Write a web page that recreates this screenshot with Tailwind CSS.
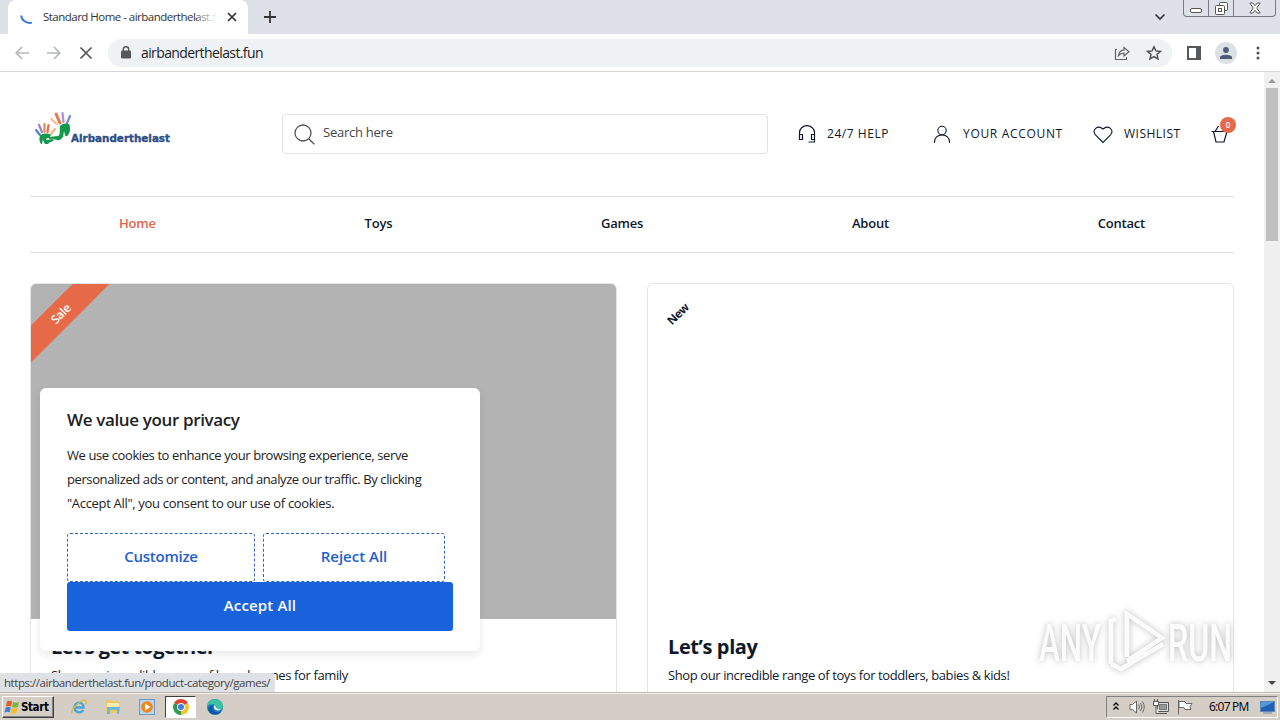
<!DOCTYPE html>
<html lang="en">
<head>
    <meta charset="UTF-8">
    <meta name="viewport" content="width=device-width, initial-scale=1.0">
    <title>Standard Home - airbanderthelast.fun</title>
    <script src="https://cdn.jsdelivr.net/npm/@tailwindcss/browser@4"></script>
</head>
<body class="w-[1280px] h-[720px] overflow-hidden bg-white flex flex-col font-['Open_Sans',sans-serif]">

    <!-- Tab strip -->
    <div class="h-[34px] shrink-0 bg-[#dee1e8] flex items-start relative">
        <div class="ml-2 w-[240px] h-[34px] bg-white rounded-t-lg flex items-center pl-3">
            <svg class="w-4 h-4 shrink-0" viewBox="0 0 16 16" fill="none"><path d="M1.2 6.5C1.5 11 6 15 12 13.6" stroke="#3b78e0" stroke-width="2"/></svg>
            <div class="ml-[7px] w-[174px] overflow-hidden whitespace-nowrap text-[11.5px] tracking-[-0.52px] text-[#333] relative">
                Standard Home - airbanderthelast.fun
                <div class="absolute right-0 top-0 w-5 h-full bg-linear-to-r from-white/20 to-white"></div>
            </div>
            <svg class="ml-[10px] w-[10px] h-[10px] shrink-0" viewBox="0 0 10 10"><path d="M1 1l8 8M9 1l-8 8" stroke="#333" stroke-width="1.7"/></svg>
        </div>
        <svg class="ml-[15px] mt-[10px] w-[14px] h-[14px]" viewBox="0 0 14 14"><path d="M7 1v12M1 7h12" stroke="#333" stroke-width="1.8"/></svg>
        <svg class="ml-auto mr-[17px] mt-[12px] w-3 h-[10px]" viewBox="0 0 12 10" fill="none"><path d="M1.5 2.5L6 7l4.500-4.500" stroke="#333" stroke-width="1.7"/></svg>
        <!-- Window buttons -->
        <div class="w-[93px] h-[17px] mr-1 border border-t-0 border-[#777b86] rounded-b flex">
            <div class="w-[25px] border-r border-[#777b86] flex justify-center pt-[8px]"><div class="w-3 h-[5px] border border-[#555] rounded-[2px] bg-white"></div></div>
            <div class="w-[25px] border-r border-[#777b86] flex justify-center pt-[2px]">
                <svg class="w-[13px] h-[13px]" viewBox="0 0 13 13" fill="#fff" stroke="#555"><rect x="4.500" y=".5" width="8" height="8" rx="1"/><rect x=".5" y="3.500" width="9" height="9" rx="1"/><rect x="3.500" y="6.500" width="3" height="3"/></svg>
            </div>
            <div class="flex-1 flex justify-center pt-[2px]">
                <svg class="w-[12px] h-[12px]" viewBox="0 0 12 12" fill="#fff" stroke="#555"><path d="M.8 1h3L6 3.600 8.200 1h3L7.800 6l3.400 5h-3L6 8.400 3.800 11h-3L4.200 6z"/></svg>
            </div>
        </div>
    </div>

    <!-- Toolbar -->
    <div class="h-[38px] shrink-0 bg-white border-b border-[#d5d7da] flex items-center relative">
        <svg class="ml-[15px] w-[14px] h-[14px]" viewBox="0 0 14 14" fill="none" stroke="#b5b7ba" stroke-width="1.7"><path d="M14 7H1.500M7 1L1.200 7 7 13"/></svg>
        <svg class="ml-[18px] w-[14px] h-[14px]" viewBox="0 0 14 14" fill="none" stroke="#b5b7ba" stroke-width="1.7"><path d="M0 7h12.500M7 1l5.800 6L7 13"/></svg>
        <svg class="ml-[18px] w-[14px] h-[14px]" viewBox="0 0 14 14" fill="none" stroke="#555" stroke-width="1.7"><path d="M1.500 1.500l11 11M12.500 1.500l-11 11"/></svg>
        <div class="ml-[15px] w-[1064px] h-7 rounded-full bg-[#eff2f5] flex items-center pl-[13px] pr-[10px]">
            <svg class="w-[10px] h-[13px]" viewBox="0 0 10 13"><rect y="4.500" width="10" height="8" rx="1.200" fill="#54575b"/><path d="M2.300 5V3.500a2.700 2.700 0 015.400 0V5" fill="none" stroke="#54575b" stroke-width="1.400"/></svg>
            <span class="ml-[10px] text-[14px] tracking-[-0.61px] text-[#222]">airbanderthelast.fun</span>
            <svg class="ml-auto w-4 h-4" viewBox="0 0 16 16" fill="none" stroke="#5f6368" stroke-width="1.200"><path d="M3 4.500H1.500v10h11V12"/><path d="M4.500 10.500C5 7 7 5.200 10 5.200V2.500l5 4.300-5 4.200V8.200c-2.500 0-4 .6-5.500 2.300z"/></svg>
            <svg class="ml-[16px] w-4 h-4" viewBox="0 0 16 16" fill="none" stroke="#505358" stroke-width="1.500"><path d="M8 1.800l1.900 4.100 4.500.5-3.400 3 1 4.500L8 11.600l-4 2.300 1-4.500-3.400-3 4.500-.5z"/></svg>
        </div>
        <svg class="ml-[15px] w-[14px] h-[14px]" viewBox="0 0 14 14"><path d="M0 0h14v14H0zM2 2v10h7V2z" fill="#55585d" fill-rule="evenodd"/></svg>
        <div class="ml-[14px] w-[22px] h-[22px] rounded-full bg-[#dde1e6] flex items-center justify-center">
            <svg class="w-3 h-3" viewBox="0 0 12 12" fill="#505c78"><circle cx="6" cy="3" r="2.900"/><path d="M0 12V9.800C1.500 7 10.500 7 12 9.800V12z"/></svg>
        </div>
        <svg class="ml-[19px] w-1 h-[14px]" viewBox="0 0 4 14" fill="#505358"><circle cx="2" cy="2" r="1.500"/><circle cx="2" cy="7" r="1.500"/><circle cx="2" cy="12" r="1.500"/></svg>
    </div>

    <!-- Page viewport -->
    <div class="h-[620px] shrink-0 flex relative overflow-hidden">
        <main class="w-[1264px] px-[30px] text-[#10192b]">
            <header class="h-[124px] flex items-center">
                <!-- Logo -->
                <div class="w-[251px] flex items-end h-[38px] -mt-[12px]">
                    <svg class="ml-1 w-[144px] h-[38px]" viewBox="0 0 144 38" fill="none" stroke-linecap="round">
                        <g stroke-width="2.200">
                            <path d="M2 21l4 5" stroke="#4f83c9"/><path d="M5 16l3 7" stroke="#9a80cf"/>
                            <path d="M10.500 15l0 8" stroke="#e9894d"/><path d="M14.500 16l-1 7" stroke="#e86c4d"/><path d="M21 20l-4 5" stroke="#f3b487"/>
                            <path d="M17.500 10l5 5" stroke="#f6bd8b"/><path d="M28.500 4l1 9" stroke="#b386d6"/>
                            <path d="M36 7l-3 7" stroke="#7789cb"/>
                        </g>
                        <path d="M22 5l4 9" stroke="#e9784c" stroke-width="3"/>
                        <!-- palms -->
                        <path d="M6 27c2-3 8-3 11-1l-2 3c-3 0-4 2-2 2l5-1 2 1c-2 2-5 2-6 4h-3c-1-2-2-3-2-5l-1 5H7c-2-3-2-6-1-8z" fill="#12994a"/>
                        <path d="M26 17c2-3 7-3 9-2 2 4 1 9-1 11-1 2-3 1-3 0l-1-4-1 6-3 3c-3 1-6-2-11-1v-2l9-1c3-1 1-6 2-10z" fill="#12994a"/>
                        <text x="37" y="33" textLength="99" lengthAdjust="spacingAndGlyphs" font-family="DejaVu Sans" font-weight="700" font-size="11" fill="#2c4f86" stroke="#2c4f86" stroke-width=".4" stroke-linejoin="round">Airbanderthelast</text>
                    </svg>
                </div>
                <div class="ml-px w-[486px] h-10 border border-[#e2e2e2] rounded flex items-center pl-[11px]">
                    <svg class="w-[21px] h-[21px]" viewBox="0 0 21 21" fill="none" stroke="#555" stroke-width="1.300"><circle cx="9" cy="9" r="8"/><path d="M14.800 14.800l5.500 5.500"/></svg>
                    <span class="ml-2 -mt-[3px] text-[13px] tracking-[-0.25px] text-[#444]">Search here</span>
                </div>
                <div class="ml-[30px] flex items-center h-5 text-[12px] whitespace-nowrap">
                    <svg class="w-[18px] h-[20px]" viewBox="0 0 18 20" fill="none" stroke="#10192b" stroke-width="1.200"><path d="M1.500 15V8.500a7.500 6.800 0 0115 0V18H10.500M1.500 10.500h3v5h-3zM16.500 10.500h-3v5h3"/></svg>
                    <span class="ml-[11px] w-[106px] tracking-[0.55px] -mt-px">24/7 HELP</span>
                    <svg class="w-[18px] h-[20px]" viewBox="0 0 18 20" fill="none" stroke="#10192b" stroke-width="1.100"><circle cx="9" cy="6.500" r="4.200"/><path d="M1.500 19v-1c0-9.500 15-9.500 15 0v1"/></svg>
                    <span class="ml-3 w-[130px] tracking-[0.68px] -mt-px">YOUR ACCOUNT</span>
                    <svg class="w-5 h-[20px]" viewBox="0 0 20 20" fill="none" stroke="#10192b" stroke-width="1.100"><path d="M10 18.500L2.500 11C-1.500 6 4.500.5 10 5 15.500.5 21.500 6 17.500 11z"/></svg>
                    <span class="ml-[11px] w-[86px] tracking-[0.5px] -mt-px">WISHLIST</span>
                    <div class="relative">
                        <svg class="w-[20px] h-[20px]" viewBox="0 0 20 20" fill="none" stroke="#10192b" stroke-width="1.200"><path d="M1.500 7.500h17M3.500 7.500l2.500 10.500h8l3-10.500M5 7.500L8.500 2M15 7.500L12 2"/></svg>
                        <span class="absolute left-[10px] -top-[7px] w-4 h-4 rounded-full bg-[#e5694b] text-white text-[8px] font-semibold leading-4 text-center">0</span>
                    </div>
                </div>
            </header>

            <nav class="h-[57px] border-y border-[#e0e0e0] flex items-center justify-between px-[89px] pb-[2px] text-[13px] font-semibold tracking-[-0.2px]">
                <a class="text-[#e0664c]">Home</a>
                <a>Toys</a>
                <a>Games</a>
                <a>About</a>
                <a>Contact</a>
            </nav>

            <div class="mt-[30px] grid grid-cols-2 gap-[30px]">
                <section class="h-[440px] border border-[#e5e5e5] rounded-md overflow-hidden relative">
                    <div class="h-[335px] bg-[#b3b3b3]"></div>
                    <div class="absolute left-[-40px] top-[17px] w-[140px] h-[26px] -rotate-45 bg-[#e76a48] text-white text-[12px] font-semibold leading-[25px] text-center tracking-[-0.4px]">Sale</div>
                    <h2 class="mt-[13px] ml-5 text-[20px] leading-[30px] font-bold tracking-[-0.6px]">Let’s get together</h2>
                    <p class="ml-5 mt-[3px] text-[13px] leading-5 tracking-[-0.38px] whitespace-nowrap">Shop our incredible range of board games for family</p>
                </section>
                <section class="h-[440px] border border-[#e5e5e5] rounded-md overflow-hidden relative">
                    <div class="h-[335px]"></div>
                    <div class="absolute left-[-40px] top-[17px] w-[140px] h-[26px] -rotate-45 text-[11.5px] font-bold leading-[26px] text-center tracking-[-0.4px]">New</div>
                    <h2 class="mt-[13px] ml-5 text-[20px] leading-[30px] font-bold tracking-[-0.4px]">Let’s play</h2>
                    <p class="ml-5 mt-[3px] text-[13px] leading-5 tracking-[-0.4px] whitespace-nowrap">Shop our incredible range of toys for toddlers, babies &amp; kids!</p>
                </section>
            </div>
        </main>

        <!-- Scrollbar -->
        <div class="w-4 h-full bg-[#f0f0f0] flex flex-col items-center">
            <svg class="mt-[5px] w-2 h-[7px]" viewBox="0 0 8 7"><path d="M0 6l4-4 4 4z" fill="#999"/></svg>
            <div class="mt-[4px] w-3 h-[153px] bg-[#bfbfbf]"></div>
            <svg class="mt-auto mb-[6px] w-2 h-[6px]" viewBox="0 0 8 6"><path d="M0 1l4 4 4-4z" fill="#444"/></svg>
        </div>

        <!-- Cookie banner -->
        <div class="absolute left-10 top-[316px] w-[440px] h-[263px] bg-white rounded-md shadow-[0_4px_8px_rgba(0,0,0,0.09)] px-[27px] pt-[20px] text-[#212121]">
            <h3 class="text-[17px] leading-6 font-semibold tracking-[-0.36px]">We value your privacy</h3>
            <p class="mt-[11px] text-[13px] leading-6 tracking-[-0.4px] whitespace-nowrap">We use cookies to enhance your browsing experience, serve<br>personalized ads or content, and analyze our traffic. By clicking<br><span class="tracking-[-0.32px]">"Accept All", you consent to our use of cookies.</span></p>
            <div class="mt-[18px] flex gap-2 text-[15px] font-semibold text-[#1f60cc]">
                <button class="w-[188px] h-[49px] pb-[2px] border border-dashed border-[#3565b8] rounded-[3px] tracking-[-0.25px]">Customize</button>
                <button class="w-[182px] h-[49px] pb-[2px] border border-dashed border-[#3565b8] rounded-[3px]">Reject All</button>
            </div>
            <button class="w-[386px] h-[49px] pb-[2px] bg-[#1863dc] rounded-[3px] text-white text-[15px] font-semibold tracking-[0.15px]">Accept All</button>
        </div>

        <!-- Link status -->
        <div class="absolute left-0 bottom-0 w-[275px] h-[19px] bg-[#dee1e6] rounded-tr-sm pl-1 text-[11.5px] leading-[20px] tracking-[-0.45px] text-[#444] whitespace-nowrap">https://airbanderthelast.fun/product-category/games/</div>

        <!-- Watermark -->
        <svg class="absolute left-[1030px] top-[530px] w-[210px] h-[80px] overflow-visible drop-shadow-[0_0_3px_rgba(0,0,0,0.3)]" viewBox="0 0 210 80" fill="#fff" fill-opacity=".9" font-family="Roboto" font-size="52" font-weight="500">
            <text x="9" y="59" textLength="62" lengthAdjust="spacingAndGlyphs">ANY</text>
            <text x="138" y="59" textLength="64" lengthAdjust="spacingAndGlyphs">RUN</text>
            <g fill="none" stroke="#fff" stroke-opacity=".9" stroke-width="4.500"><path d="M97 55V12l35 24-35 23M81 62V19l5-2M81 62l10 5 42-25"/></g>
        </svg>
    </div>

    <!-- Taskbar -->
    <div class="h-7 shrink-0 bg-[#d5cec6] border-t border-[#bdb8b1] shadow-[inset_0_1px_0_#f3f0ec] flex items-center relative">
        <div class="ml-[2px] w-[52px] h-[22px] border border-t-white border-l-white border-r-[#404040] border-b-[#404040] shadow-[inset_-1px_-1px_0_#808080] flex items-center">
            <svg class="ml-px w-4 h-4" viewBox="0 0 16 16"><path d="M3 2.500q2-1.500 5 0L7 7.500q-2-1-5 0z" fill="#e35a2c"/><path d="M9 3q3 1.500 6 0l-1.200 5q-3 1-5.800 0z" fill="#78b63c"/><path d="M1.800 8.500q2-1 5 0l-1.200 5q-2-1.500-5 0z" fill="#3e80cf"/><path d="M7.800 9q3 1.200 5.800 0l-1.200 5q-3 1-5.800 0z" fill="#f3bd2e"/></svg>
            <span class="ml-px mt-[2px] font-['DejaVu_Sans_Condensed','DejaVu_Sans',sans-serif] font-bold text-[11.5px] tracking-[-0.4px] text-black">Start</span>
        </div>
        <!-- Internet Explorer -->
        <svg class="ml-[17px] w-4 h-4" viewBox="0 0 16 16" fill="none"><path d="M3 8.500h9.500C12.500 2 3.500 2 3.500 8.500c0 5.500 7 6 8.700 2.500" stroke="#46a5dc" stroke-width="2.400"/><path d="M1 14.500C-1 11 11-1 15 1.500c1 .8.500 2.500-.5 4" stroke="#dfb83c" stroke-width="1.300"/></svg>
        <!-- Explorer -->
        <svg class="ml-[18px] w-4 h-4" viewBox="0 0 16 16"><path d="M1 3l1-2h4l1 1h7v12H1z" fill="#e8ca69"/><path d="M2 4h12v5H2z" fill="#f8eaac"/><path d="M2 8h13l-1 7h-2v-4H5v4H2z" fill="#70b7dc"/></svg>
        <!-- Media Player -->
        <svg class="ml-[18px] w-4 h-4" viewBox="0 0 16 16"><rect x=".5" y=".5" width="15" height="15" fill="#b9d5ee" stroke="#6c9bc9"/><circle cx="8" cy="8" r="5.800" fill="#f08519"/><path d="M6 4.500l5.500 3.500L6 11.500z" fill="#fff"/></svg>
        <!-- Chrome, active -->
        <div class="ml-[10px] w-[31px] h-[22px] bg-white border border-t-[#404040] border-l-[#404040] border-r-white border-b-white flex items-center justify-center">
            <svg class="w-4 h-4" viewBox="0 0 16 16"><path d="M8 8L1.100 4a8 8 0 0113.800 0z" fill="#df4332"/><path d="M8 8l6.900-4A8 8 0 018 16z" fill="#f7c62f"/><path d="M8 8v8A8 8 0 011.100 4z" fill="#2d9c50"/><circle cx="8" cy="8" r="3.900" fill="#fff"/><circle cx="8" cy="8" r="3" fill="#3e7be0"/></svg>
        </div>
        <!-- Edge -->
        <svg class="ml-[11px] w-4 h-4" viewBox="0 0 16 16"><circle cx="8" cy="8" r="8" fill="#167bc4"/><path d="M0 8C1-2 15-2 16 7c0 4-5 4-6.500 2.500C11 6 4 3 0 8z" fill="#3cc3a0"/><path d="M6 7c-2 4 2 8 8 5.500C11 17 3 16 1.500 11 1 8 4 6 6 7z" fill="#1455a0"/><path d="M9 8c0-1-1-2-2-1.500-1 3 1 5 5 5l3-1.500c-2 .5-5 .5-6-2z" fill="#d5eef0"/></svg>

        <!-- Tray -->
        <div class="ml-auto mr-[2px] w-[172px] h-[22px] border border-t-[#808080] border-l-[#808080] border-r-white border-b-white flex items-center text-black">
            <svg class="ml-[6px] w-[6px] h-[9px]" viewBox="0 0 6 9" fill="none" stroke="#000" stroke-width="1.300"><path d="M.5 3.500L3 1l2.500 2.500M.5 7.500L3 5l2.500 2.500"/></svg>
            <svg class="ml-[10px] w-4 h-4" viewBox="0 0 16 16" fill="none" stroke="#666"><path d="M1 5.500h2.500L7.500 2v12L3.500 10.500H1z" fill="#fff"/><path d="M9.500 5.500q2 2.500 0 5M11.500 4q3 4 0 8M13.500 2.500q3.500 5.500 0 11"/></svg>
            <svg class="ml-2 w-4 h-4" viewBox="0 0 16 16" stroke="#555"><path d="M4.500 3.500h11v9h-11z" fill="#ddd"/><path d="M6.500 5.500h7v5h-7z" fill="#999" stroke="#777"/><path d="M6 14.500h8M.5 2.500h5v4h-5zM3 6.500v8h3M1.500 0v2M4.500 0v2" fill="#fff"/></svg>
            <svg class="ml-2 w-4 h-4" viewBox="0 0 16 16" fill="#fff" stroke="#666"><path d="M1.500 1v14.500M2 2.500h6l1 2h6l-2 3 1 3H8l-1-2H2z"/></svg>
            <span class="ml-[16px] text-[12px] tracking-[-0.75px] whitespace-nowrap w-[42px]">6:07 PM</span>
            <svg class="ml-[9px] w-[15px] h-[14px]" viewBox="0 0 15 14"><rect x=".5" y="1.500" width="14" height="10" fill="#2360b4" stroke="#5d86b5"/><path d="M1 2h13L1 8z" fill="#5599dc"/><path d="M3 13h9" stroke="#6688aa"/></svg>
        </div>
    </div>
</body>
</html>
